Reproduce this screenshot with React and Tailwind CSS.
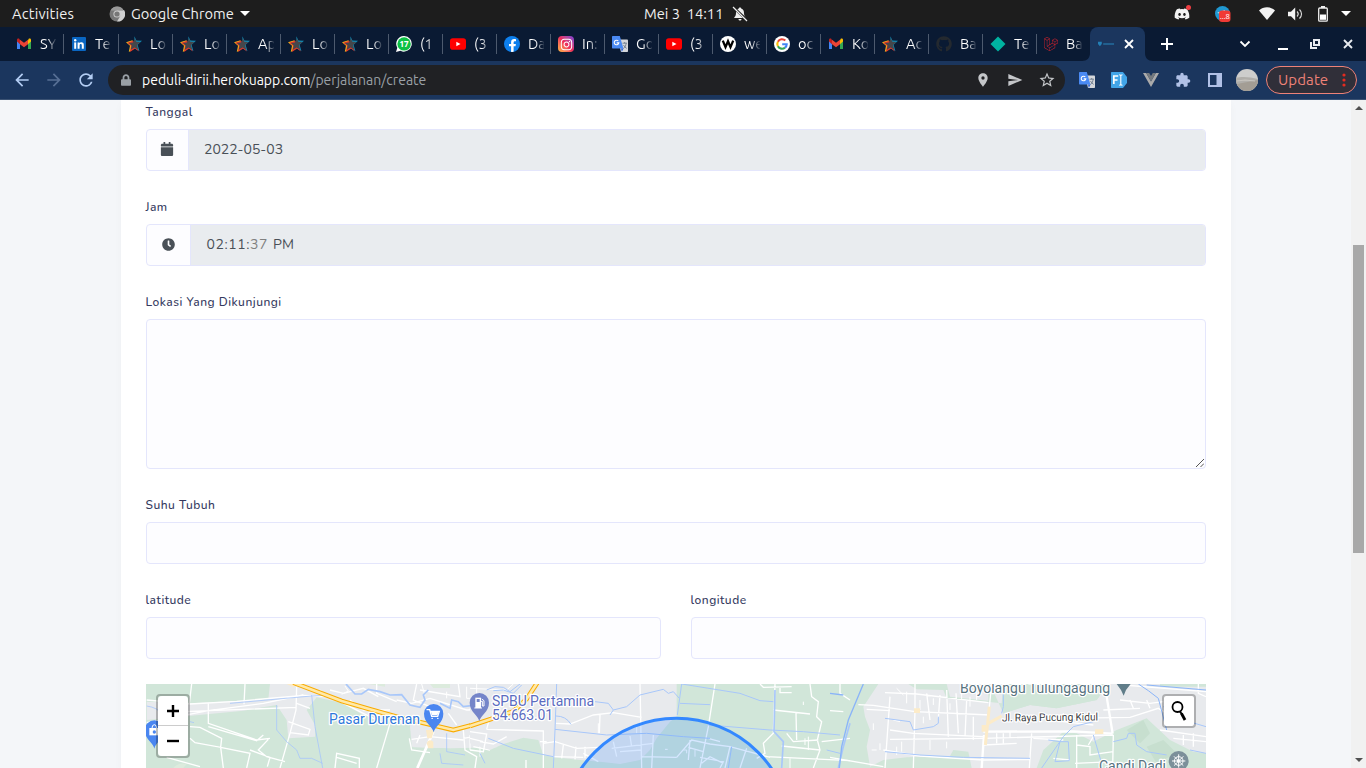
import React from "react";
import { FaCalendar, FaClock, FaDiscord, FaGithub, FaLock, FaInstagram, FaFacebookF, FaLaravel } from "react-icons/fa";
import { MdArrowBack, MdArrowForward, MdRefresh, MdStarOutline, MdLocationOn, MdSend, MdExtension } from "react-icons/md";

const Gmail = () => (
  <svg viewBox="0 0 16 16" className="size-4">
    <path d="M1 4.2V13h3V7.2z" fill="#4285f4" />
    <path d="M15 4.2V13h-3V7.2z" fill="#34a853" />
    <path d="M12 4.2V8.2l3-2.6V4c0-1.5-1.6-1.8-2.4-1.1z" fill="#fbbc04" />
    <path d="M1 4v1.6l3 2.6V4.2l-.6-1.3C2.600 2.200 1 2.500 1 4z" fill="#c5221f" />
    <path d="M4 8.200V3.800l4 3 4-3v4.400l-4 3z" fill="#ea4335" />
  </svg>
);

const LinkedIn = () => (
  <svg viewBox="0 0 16 16" className="size-4">
    <rect x="1" y="1" width="14" height="14" rx="1" fill="#0a66c2" />
    <rect x="3.200" y="6.400" width="2" height="6.400" fill="#fff" />
    <circle cx="4.200" cy="4.200" r="1.200" fill="#fff" />
    <path d="M6.600 6.400h1.900v.9c.8-1.500 4.300-1.600 4.300 1.500v4h-2V9.500c0-2-2.200-1.800-2.200 0v3.300h-2z" fill="#fff" />
  </svg>
);

const Star = () => (
  <svg viewBox="0 0 16 16" className="size-4">
    <path d="M8.400.2l2 4.200 5.600.3-4.400 4.100L13.400 15l-4.900-2.800" fill="#1488b0" />
    <path d="M6.500 4.300L0 6.300l4 3.400L2.800 16l5.700-3.600z" fill="#f5b51b" />
    <path d="M7.200 4.700L1.200 6.700l3.800 3L4 15.900l5-3.500 3.800 3z" fill="#e0352b" />
    <path d="M9 2.600l1.300 3.100 4.200.3-3.500 3.100 1.200 4.700-3.600-2.300-3.900 2.300 1-4.200-2.800-2.600 4.100-.5z" fill="#45474b" />
  </svg>
);

const WhatsApp = () => (
  <svg viewBox="0 0 16 16" className="size-4">
    <path d="M8.200 0A7.800 7.800 0 1 1 4.500 14.800L0 16l1.300-4.300A7.800 7.800 0 0 1 8.200 0z" fill="#fff" />
    <circle cx="8.100" cy="7.900" r="6.700" fill="#0cc143" />
    <text x="8" y="10.700" textAnchor="middle" fontSize="8" fontWeight="700" fill="#fff" fontFamily="Open Sans">17</text>
  </svg>
);

const YouTube = () => (
  <svg viewBox="0 0 16 16" className="size-4">
    <rect y="2.300" width="16" height="11.400" rx="2.800" fill="#f00" />
    <path d="M6.300 5.700v4.600l4.200-2.300z" fill="#fff" />
  </svg>
);

const Facebook = () => (
  <span className="flex size-4 items-end justify-center overflow-hidden rounded-full bg-[#0d7fed]">
    <FaFacebookF className="size-[13px] text-white" />
  </span>
);

const Instagram = () => (
  <span className="flex size-4 items-center justify-center rounded bg-linear-to-tr from-[#fdb83c] via-[#ee2a5b] to-[#7a35d8]">
    <FaInstagram className="size-[13px] text-white" />
  </span>
);

const Translate = () => (
  <svg viewBox="0 0 16 16" className="size-4 shrink-0">
    <path d="M6 3.500h9.200c.5 0 .8.300.8.800v10.900c0 .5-.3.800-.8.800H9z" fill="#d5d7db" />
    <path d="M10.500 7.200h4.500M12.700 6v1.200M11.300 12.500c2-1.300 2.600-3 2.800-5.200M11.500 9c.6 1.300 1.800 2.700 3.200 3.400" stroke="#6d7b8c" strokeWidth=".9" fill="none" />
    <path d="M1 0h6.800l3.600 12.500H1c-.6 0-1-.4-1-1V1c0-.6.400-1 1-1z" fill="#4a8af4" />
    <path d="M9 12.500h2.600L9.800 16z" fill="#3367d6" />
    <path d="M6.300 5a2.300 2.300 0 1 0 .5 1.900H4.700" stroke="#fff" strokeWidth="1.100" fill="none" />
  </svg>
);

const WCircle = () => (
  <svg viewBox="0 0 16 16" className="size-4">
    <circle cx="8" cy="8" r="8" fill="#fff" />
    <path d="M2.800 4.600l2.700 6.500L8 5.200l2.500 5.900 2.700-6.500" fill="none" stroke="#000" strokeWidth="2.300" />
  </svg>
);

const Google = () => (
  <svg viewBox="0 0 16 16" className="size-4">
    <circle cx="8" cy="8" r="8" fill="#fff" />
    <g fill="none" strokeWidth="2.100">
      <path d="M11.300 4.600A4.700 4.700 0 0 0 3.900 5.700" stroke="#ea4335" />
      <path d="M3.900 5.700a4.700 4.700 0 0 0 0 4.600" stroke="#fbbc05" />
      <path d="M3.900 10.300a4.700 4.700 0 0 0 7.100 1.300" stroke="#34a853" />
      <path d="M11 11.600c1.200-1 1.700-2.200 1.700-3.400H8.200" stroke="#4285f4" />
    </g>
  </svg>
);

const GitHub = () => <FaGithub className="size-4 text-[#24292f]" />;
const Diamond = () => (
  <svg viewBox="0 0 16 16" className="size-4"><path d="M8 .5L15.500 8 8 15.500.5 8z" fill="#00b3a1" /></svg>
);
const Laravel = () => <FaLaravel className="size-4 text-[#d4232d]" />;

const tabs = [
  [LinkedIn, "Te"], [Star, "Lo"], [Star, "Lo"], [Star, "Ap"], [Star, "Lo"], [Star, "Lo"],
  [WhatsApp, "(1"], [YouTube, "(3"], [Facebook, "Da"], [Instagram, "In:"], [Translate, "Go"], [YouTube, "(3"],
  [WCircle, "we"], [Google, "oc"], [Gmail, "Ko"], [Star, "Ac"], [GitHub, "Ba"], [Diamond, "Te"], [Laravel, "Ba"],
];

const TabTitle = ({ title }) => (
  <span className="ml-2 w-4 shrink-0 overflow-hidden bg-linear-to-r from-white from-45% to-white/10 bg-clip-text text-[14.67px] leading-5 whitespace-nowrap text-transparent">
    {title}
  </span>
);

function Tab({ Icon, title, wide }) {
  return (
    <div className={wide ? "flex h-full w-[55px] shrink-0 items-center pl-[7px]" : "flex h-full w-[54px] shrink-0 items-center pl-[7px]"}>
      <Icon />
      <TabTitle title={title} />
      <span className="ml-auto h-5 w-px bg-[#4d5a6e]" />
    </div>
  );
}

function TopBar() {
  return (
    <div className="flex h-[27px] items-center bg-[#1d1d1d] text-[14.67px] text-[#f0f0f0]">
      <span className="w-[97px] pt-px pl-3 tracking-[0.2px]">Activities</span>
      <svg viewBox="0 0 16 16" className="ml-3 size-4">
        <circle cx="8" cy="8" r="7.500" fill="#777" />
        <path d="M8 4h7a7.500 7.500 0 0 1-7 11.500L11.300 10z" fill="#d0d0d0" />
        <path d="M1.500 4.500A7.500 7.500 0 0 1 14.800 4.700H8z" fill="#999" />
        <circle cx="8" cy="8" r="3.600" fill="#ccc" />
        <circle cx="8" cy="8" r="2.600" fill="#777" />
      </svg>
      <span className="ml-[6px] w-[105px] pt-px whitespace-nowrap">Google Chrome</span>
      <svg viewBox="0 0 10 5" className="ml-1 h-[5px] w-[10px] fill-white"><path d="M0 0h10L5 5z" /></svg>
      <span className="ml-[394px] w-[80px] pt-px whitespace-pre">Mei 3  14:11</span>
      <svg viewBox="0 0 16 16" className="ml-2 size-4">
        <path d="M8 1.500c-.8 0-1.200.5-1.200 1C4.700 3 4 5 4 7c0 2-.5 3.200-1.700 4.200V12h11.400v-.8C12.500 10.200 12 9 12 7c0-2-.7-4-2.800-4.500 0-.5-.4-1-1.200-1zM6.500 13c0 2 3 2 3 0z" fill="#eee" />
        <path d="M.5.500l15 14" stroke="#1d1d1d" strokeWidth="2.600" />
        <path d="M1 1l14 14" stroke="#eee" strokeWidth="1.200" />
      </svg>
      <span className="relative ml-auto mr-[25px]">
        <FaDiscord className="size-4 text-[#f2f2f2]" />
        <span className="absolute -top-px -right-px size-[5px] rounded-full bg-[#ef3e42]" />
      </span>
      <svg viewBox="0 0 16 16" className="mr-[28px] size-4">
        <circle cx="7.500" cy="7.500" r="7.500" fill="#2098d1" />
        <path d="M2 7l8-3-1 4z" fill="#fff" />
        <rect x="4" y="4.500" width="11.500" height="11.500" rx="3" fill="#f03a35" />
        <text x="9.700" y="13" fontSize="7.500" textAnchor="middle" fill="#fff" fontFamily="Open Sans">…8</text>
      </svg>
      <svg viewBox="0 0 16 13" className="mr-[13px] h-[13px] w-4"><path d="M0 3.500C4.500-.8 11.500-.8 16 3.500L8 13z" fill="#f2f2f2" /></svg>
      <svg viewBox="0 0 16 14" className="mr-[14px] h-[14px] w-4">
        <path d="M0 4.700h3L7.200.5v13L3 9.300H0z" fill="#f2f2f2" />
        <path d="M9 4.500c1.500 1.500 1.500 3.500 0 5M11.500 2.500c2.700 2.700 2.700 6.300 0 9" fill="none" stroke="#ddd" strokeWidth="1.100" />
      </svg>
      <svg viewBox="0 0 10 16" className="mr-[13px] h-4 w-[10px]">
        <path d="M3 0h4v2H3z" fill="#eee" />
        <rect x=".7" y="2" width="8.600" height="13.200" rx="1" fill="none" stroke="#eee" strokeWidth="1.300" />
        <path d="M2 8.500h6v5.300H2z" fill="#fff" />
      </svg>
      <svg viewBox="0 0 10 5" className="mr-[15px] h-[5px] w-[10px] fill-white"><path d="M0 0h10L5 5z" /></svg>
    </div>
  );
}

function TabStrip() {
  return (
    <div className="flex h-[34px] items-center bg-[#0a1a33] pl-[9px]">
      <Tab Icon={Gmail} title="SY" wide />
      {tabs.map(([Icon, title], i) =>
        i < tabs.length - 1 ? (
          <Tab key={i} Icon={Icon} title={title} wide={i === 0} />
        ) : (
          <div key={i} className="flex h-full w-[45px] shrink-0 items-center pl-[7px]">
            <Icon />
            <TabTitle title={title} />
          </div>
        )
      )}
      <div className="flex h-full shrink-0 items-end">
        <svg viewBox="0 0 8 8" className="size-2 fill-[#1b365e]"><path d="M8 0v8H0c5 0 8-3 8-8z" /></svg>
        <div className="flex h-full w-[55px] items-center rounded-t-lg bg-[#1b365e]">
          <svg viewBox="0 0 18 6" className="ml-2 h-[6px] w-[17px]">
            <path d="M0 .5h4v2.500L2 5.500 0 3z" fill="#237fb5" />
            <path d="M5.500 3h11.500" stroke="#2471a3" strokeWidth="1.500" />
          </svg>
          <svg viewBox="0 0 10 10" className="ml-[9px] size-[10px]"><path d="M1 1l8 8M9 1L1 9" stroke="#fff" strokeWidth="1.800" /></svg>
        </div>
        <svg viewBox="0 0 8 8" className="size-2 fill-[#1b365e]"><path d="M0 0v8h8C3 8 0 5 0 0z" /></svg>
      </div>
      <svg viewBox="0 0 12 12" className="ml-2 size-3 shrink-0"><path d="M6 0v12M0 6h12" stroke="#fff" strokeWidth="2" /></svg>
      <svg viewBox="0 0 12 8" className="ml-[66px] h-2 w-3 shrink-0"><path d="M1.500 1.500L6 6l4.500-4.500" fill="none" stroke="#fff" strokeWidth="1.800" /></svg>
      <span className="mt-[9px] ml-[27px] h-[2px] w-[10px] shrink-0 bg-white" />
      <svg viewBox="0 0 10 10" className="ml-[22px] size-[10px] shrink-0" fill="none" stroke="#e8ebf0" strokeWidth="2">
        <path d="M4 1h5v5H4z" /><path d="M1 3v6h6" />
      </svg>
      <svg viewBox="0 0 10 10" className="ml-[23px] size-[10px] shrink-0"><path d="M1 1l8 8M9 1L1 9" stroke="#e8ebf0" strokeWidth="1.900" /></svg>
    </div>
  );
}

function Toolbar() {
  const cell = "flex w-8 shrink-0 items-center justify-center";
  return (
    <div className="flex h-[39px] items-center border-b border-[#3b5273] bg-[#1b365e] pl-[6px] text-[15px]">
      <span className={cell}><MdArrowBack className="size-5 text-[#b3cdf3]" /></span>
      <span className={cell}><MdArrowForward className="size-5 text-[#576f94]" /></span>
      <span className={cell}><MdRefresh className="size-5 text-[#b3cdf3]" /></span>
      <div className="ml-[6px] flex h-[30px] w-[957px] items-center rounded-full bg-[#202124] pr-[2px] pl-[13px] text-[14px]">
        <FaLock className="mr-[11px] h-3 w-[10px] text-[#9aa0a6]" />
        <span className="text-white">peduli-dirii.herokuapp.com</span>
        <span className="text-[#9aa0a6]">/perjalanan/create</span>
        <span className="ml-auto" />
        <span className={cell}><MdLocationOn className="size-4 text-[#c4c6c9]" /></span>
        <span className={cell}><MdSend className="size-4 text-[#c4c6c9]" /></span>
        <span className={cell}><MdStarOutline className="size-[18px] text-[#c4c6c9]" /></span>
      </div>
      <span className="ml-[6px]" />
      <span className={cell}><Translate /></span>
      <span className={cell}>
        <svg viewBox="0 0 16 16" className="size-4">
          <path d="M1 0h11l4 5v6l-4 5H1c-.6 0-1-.4-1-1V1c0-.6.400-1 1-1z" fill="#42a5e8" />
          <path d="M2.800 12V4h4.400M2.800 8h3.700" fill="none" stroke="#fff" strokeWidth="1.700" />
          <path d="M8.200 2.800c1 0 1.600.3 1.600 1v8.400c0 .7-.6 1-1.600 1M11.500 2.800c-1 0-1.700.3-1.700 1M11.500 13.200c-1 0-1.700-.3-1.700-1" fill="none" stroke="#fff" strokeWidth="1.100" />
        </svg>
      </span>
      <span className={cell}>
        <svg viewBox="0 0 16 14" className="h-[14px] w-4"><path d="M0 0h3.200L8 8.500 12.800 0H16L8 14z" fill="#aaa" /><path d="M3.200 0h3L8 3.100 9.800 0h3L8 8.500z" fill="#74797e" /></svg>
      </span>
      <span className={cell}><MdExtension className="size-4 text-[#b1c1e6]" /></span>
      <span className={cell}>
        <svg viewBox="0 0 14 14" className="size-[14px]"><path d="M0 0h14v14H0z" fill="#b1c1e6" /><path d="M2 2h6.500v10H2z" fill="#1b365e" /></svg>
      </span>
      <span className={cell}>
        <svg viewBox="0 0 22 22" className="size-[22px] shrink-0">
          <clipPath id="avatar"><circle cx="11" cy="11" r="11" /></clipPath>
          <g clipPath="url(#avatar)">
            <path d="M0 0h22v22H0z" fill="#cdcdcc" />
            <path d="M0 9c6-2 14-1 22 1v12H0z" fill="#b0aeaa" />
            <path d="M0 16c6-3 14-3 22-5v12H0z" fill="#a39d94" />
            <path d="M1 12l8-1 10 1" stroke="#c9c6c0" strokeWidth="1.200" fill="none" />
          </g>
        </svg>
      </span>
      <div className="ml-[3px] flex h-7 w-[91px] items-center rounded-full border border-[#ee8278] bg-[#302f39] pl-[11px] text-[#ee8278]">
        <span className="w-[50px] tracking-[0.1px]">Update</span>
        <svg viewBox="0 0 4 14" className="ml-[14px] h-[14px] w-1 fill-[#e32b20]"><circle cx="2" cy="2" r="1.600" /><circle cx="2" cy="7" r="1.600" /><circle cx="2" cy="12" r="1.600" /></svg>
      </div>
    </div>
  );
}

function Field({ label, children, className = "" }) {
  return (
    <div className={"mb-[25px] " + className}>
      <div className="mb-[7px] -ml-[0.5px] pt-px text-[12px] leading-5 font-[550] tracking-[0.5px] text-[#34395e]">{label}</div>
      {children}
    </div>
  );
}

const pin = "M0 56C-3 38-29 28-29 0a29 29 0 1 1 58 0C29 28 3 38 0 56z";

function MapDrawing() {
  return (
    <svg viewBox="0 0 1060 84" className="block h-[84px] w-[1060px] bg-[#d1e6d9]" fontFamily="Roboto">
      <g transform="translate(-16 -14) scale(.33333)" fill="none">
        <path d="M420 42H1100V190L1010 205 960 235H845L835 185 770 160 750 140 700 135 640 100 560 82 530 120 555 165V200L475 205 470 150 440 105 340 122 50 150V95L180 100 415 88z" fill="#e8eaed" />
        <path d="M715 42h50v8zM900 42h60v12h-50zM130 294q15-18 40-12l-10 12z" fill="#dcebdd" />
        <path d="M740 140L840 165 850 232 960 235V294H740z" fill="#d1e6d9" />
        <path d="M840 165L950 180 1100 185V232L960 235 845 230z" fill="#e8eaed" />
        <g stroke="#fff" strokeWidth="4">
          <path d="M50 90L180 102 320 94 520 76 600 80 760 160M50 158L235 122 400 100 520 75M185 42L178 100M345 42L342 103M500 50L498 120 480 190 450 294M160 125L500 112M235 98V160L380 210 420 205M235 170L380 212 400 195M415 208L385 240 410 260 465 275M180 170L210 172 275 205 272 232 195 218 180 205M272 232L360 250 350 294M272 232L280 294M110 262L210 290M360 240L420 262 412 290M475 155L540 178 535 195 480 188M615 294L620 250 688 265V294M740 294L780 160M620 262L680 280M500 100L540 115M600 60L640 70 700 55 745 80M660 90L700 120 780 120M740 42V70L800 95M860 42L850 90 900 110M800 90L845 100 900 85 1010 120 1090 115M870 60L990 80 985 42M1040 42L1020 120 1090 140M838 205L845 240 900 248M870 195L860 220M845 208L900 200 1000 210M955 130L980 165M1000 180L1005 240 1040 260 1035 294M1000 205L1090 190M1030 230L1080 240" />
          <path d="M910 185L862 294" strokeWidth="8" />
          <path d="M645 48l10 15-20 10M570 60l20 15M1010 50v35h40M1050 42v25M950 65v20M875 42l10 35M1050 200v60M1020 195v45" strokeWidth="3" />
        </g>
        <g stroke="#a8c7fa" strokeWidth="4">
          <path d="M50 108q35 5 45 25M180 155l12 3M440 105V180L470 215 500 240 510 265 545 265 578 280M545 75L555 170 578 294M300 100L545 78 600 75M930 250L935 280 1000 285M950 190V245L1005 255" strokeWidth="2.500" />
          <path d="M648 42L675 72H695L715 58 750 65 780 75 815 74 840 105 870 112 885 90 880 75 895 60M930 100L960 115 965 90 985 95 1000 110 1080 100" strokeWidth="5" />
        </g>
        <path d="M888 180h25l-8 25h-13zM890 220q5-15 20-5v20h-15zM470 42h30l-10 10z" fill="#fcebc8" />
        <path d="M490 38L635 93 725 119 795 139 970 180 1100 146" stroke="#f9ab00" strokeWidth="14" />
        <path d="M490 38L635 93 725 119 795 139 970 180 1100 146" stroke="#ffe9a8" strokeWidth="8" />
        <g transform="translate(911 131)"><path d={pin} fill="#4a86f0" /><path d="M-20-12h8l6 20h18l5-15h-26M-5 14h1M12 14h1" stroke="#fff" strokeWidth="4" strokeLinecap="round" /><path d="M-9-8h25l-5 13H-5z" fill="#fff" /></g>
        <g transform="translate(73 180)"><path d={pin} fill="#4a86f0" /><rect x="-15" y="-6" width="28" height="22" fill="#fff" /><path d="M-7-5q0-11 7-11t7 11" stroke="#fff" strokeWidth="3" /><circle cy="6" r="5" fill="#4a86f0" /></g>
      </g>

      <g transform="translate(324 -14) scale(.33333)" fill="none">
        <path d="M0 42H620V140L600 155 560 205 540 240 510 270 450 282 390 275 330 270 255 262 220 255 205 210 160 203 100 222 60 240 0 220z" fill="#e8eaed" />
        <g stroke="#fff" strokeWidth="4">
          <path d="M50 178L220 183V294M0 185L50 192 40 245 0 240M50 178L60 140M30 215L70 222 110 200M0 205L40 215M220 220L255 215 320 235 385 232M280 225L275 265M318 230L315 268M250 260L340 262M168 270V294M210 215h20M345 230v35M258 160L300 162 370 135 430 128 515 142M390 135L388 190M510 42L515 294M385 275L340 250M430 215L440 260M425 235L550 220M480 198L485 230M450 245L515 240M735 42L715 170 690 294M550 195L545 294M515 260L620 262M620 262L665 210 720 222 780 230 900 262M660 210L655 270M655 232L700 245M780 230L765 294M830 235L810 294M715 205L750 215M690 262L760 275 750 294M695 280L720 260 760 280M870 42L880 52 965 50M915 42L910 190 880 220 885 250 860 265M910 120L1020 132M930 50V68H965M1020 42L1025 80 1045 95 1040 140 1055 155 1042 210 1050 240 1030 294M978 130L980 210M935 228L1050 240M950 190L970 215 1045 210M890 260L1140 272M1110 42V70L1140 90M1055 215L1140 205" />
          <path d="M0 55L110 60 130 42M20 42v30M385 160v30M500 170v20M585 238h8M640 240h10v10M675 240v20M1000 95v10M1005 205v20M1015 200v40M960 265v29" strokeWidth="3" />
        </g>
        <g stroke="#a8c7fa" strokeWidth="3">
          <path d="M50 60L75 50 100 52 120 65 150 42M70 62L100 60 130 70 155 45" />
          <path d="M260 42L255 180 250 294M375 95L415 100 430 120 470 110 510 75 580 58 595 70 610 65 628 85M635 42L622 135M635 42L810 70 870 92 910 95M630 100L720 104M430 120L420 135M255 178L410 195 530 190 640 200 720 205M55 205L130 235 250 260M258 138q30 0 45 25M30 250l15 30M715 165L900 180 1000 185 1110 195M785 230L775 294M1070 240L1110 250" />
          <path d="M915 60L912 185 940 215 935 294M1140 160L1120 230 1105 294" strokeWidth="5" />
        </g>
        <path d="M0 168L70 145 130 124 170 87 202 38" stroke="#f9ab00" strokeWidth="14" />
        <path d="M0 168L70 145 130 124 170 87 202 38" stroke="#ffe9a8" strokeWidth="8" />
        <circle cx="619" cy="491" r="346" fill="#3388ff" fillOpacity=".2" stroke="#3388ff" strokeWidth="9" />
        <g transform="translate(28 98)"><path d={pin} fill="#7585c9" /><path d="M5-4h4V10h5V-6L7-11M-15 16H8" stroke="#fff" strokeWidth="3" /><path d="M-12-15H5V16h-17z" fill="#fff" /><path d="M-8-11H1v9h-9z" fill="#7585c9" /></g>
      </g>

      <g transform="translate(684 -14) scale(.33333)" fill="none">
        <path d="M145 42H1128V250L1090 245 1020 210 950 145 860 180 790 215 740 190 700 185 640 240 620 294H425L415 245 370 240 360 258 230 262 160 270 120 290 110 230 120 180 105 140 100 110z" fill="#e8eaed" />
        <path d="M235 42H480L520 130 600 105 680 115 800 90 835 42H520L515 100 420 90 350 85 340 60 260 58zM990 42h138v8H990z" fill="#d1e6d9" />
        <path d="M520 42h315l-35 48-120 25-80-10-80 25z" fill="#d1e6d9" />
        <path d="M350 42H475V92L360 80z" fill="#e8eaed" />
        <path d="M890 180l50-30 20 40-30 30zM950 230l50-20 40 40-60 30z" fill="#c7dfcf" />
        <g stroke="#fff" strokeWidth="4">
          <path d="M85 104L130 106 255 125 480 135M110 118L180 122M180 80L165 294M255 42V120L250 294M180 208L460 205 850 195M165 68L260 72 475 98M290 70L300 150M330 75L325 145M378 70L385 190M350 60L355 200M410 90L405 200M430 140V210M160 240L270 258 460 270 600 268M180 180L250 190 460 200M485 42L475 140M460 225L560 220M500 190V220M520 190V220M540 185V205M605 190L598 294M700 130V155L790 165M690 145L900 142 985 115 1010 130M870 90L960 100 1000 95M820 120L930 115M900 90L910 115M950 90L960 115M740 195V294M740 225L780 230V255L850 245M610 205L700 210M775 225L790 200M0 122L40 125M0 262L160 290M850 195L848 294M990 180L1128 200M1060 195V225M1090 190V230M1030 205L1128 215M1105 42V70L1128 80M880 45L1128 65M670 265L720 270M735 280L850 275" />
          <path d="M200 55l20 20M230 65v35M270 90v30M310 85v20M360 100v20M395 60v30M420 80v30M190 150l20 5M215 215v30M130 160v20M150 220v20M300 210v30M350 215v20M440 60v30M125 240h15M200 230v25M280 140v20" strokeWidth="3" />
          <path d="M460 185L730 184 848 191M848 191L830 80M462 195L455 294" strokeWidth="7" />
        </g>
        <path d="M478 110L473 160 466 225M475 160L515 138" stroke="#fcebc8" strokeWidth="9" />
        <path d="M455 165h18v20h-18zM795 178h25v14h-25zM252 115h18v14h-18z" fill="#fcebc8" />
        <g stroke="#a8c7fa" strokeWidth="3">
          <path d="M165 145L240 155 250 180 310 170 325 160V140M165 245L270 255 400 262 600 265M520 60V110L515 130M790 155L730 170 700 200 635 294M655 210L690 215 675 275 718 272 715 215 690 215M790 195L815 280M850 215L890 205 895 190 915 190 920 225 950 245 1010 255M1000 110L1060 150 1128 170M1080 240L1128 250" />
          <path d="M100 42L55 150 35 230 28 294M0 70L40 75" stroke="#8ab4f8" strokeWidth="4" />
          <path d="M925 42L955 62 985 85 1010 180M950 45L1128 60" stroke="#8ab4f8" />
        </g>
        <path d="M860 42h42l-14 18-7 17-8-17z" fill="#607d89" />
        <g transform="translate(1046 273)"><circle r="30" fill="#7c909a" /><g stroke="#fff" strokeWidth="3"><circle r="13" /><circle r="4" /><path d="M0-20V20M-20 0H20M-14-14L14 14M14-14L-14 14" /></g></g>
      </g>
      <g stroke="#fff" strokeWidth="2.500" strokeLinejoin="round" paintOrder="stroke">
        <text x="183" y="40" fontSize="14" fill="#2e78db" textLength="91">Pasar Durenan</text>
        <text x="346" y="22" fontSize="14" fill="#5b6cc0" textLength="102">SPBU Pertamina</text>
        <text x="346" y="36" fontSize="14" fill="#5b6cc0" textLength="61">54.663.01</text>
        <text x="814" y="9" fontSize="14" fill="#58737f" textLength="150">Boyolangu Tulungagung</text>
        <text x="856" y="37" fontSize="10.500" fill="#3c4043" textLength="96" transform="rotate(-.5 900 35)">Jl. Raya Pucung Kidul</text>
        <text x="953" y="87" fontSize="14" fill="#58737f" textLength="67">Candi Dadi</text>
      </g>
    </svg>
  );
}

function MapPanel() {
  return (
    <div className="relative h-[84px] overflow-hidden">
      <MapDrawing />
      <div className="absolute top-[10px] left-[10px] w-[34px] rounded border-2 border-black/25 bg-clip-padding">
        <div className="flex h-[30px] items-center justify-center rounded-t-sm border-b border-[#ccc] bg-white"><svg viewBox="0 0 12 12" className="size-3"><path d="M6 0v12M0 6h12" stroke="#000" strokeWidth="2.400" /></svg></div>
        <div className="flex h-[30px] items-center justify-center rounded-b-sm bg-white"><svg viewBox="0 0 12 12" className="size-3"><path d="M0 6h12" stroke="#000" strokeWidth="2.400" /></svg></div>
      </div>
      <div className="absolute top-[10px] right-[10px] flex size-[34px] items-center justify-center rounded border-2 border-black/25 bg-white bg-clip-padding">
        <svg viewBox="0 0 16 20" className="h-5 w-4" fill="none" stroke="#000"><circle cx="6.500" cy="6" r="5" strokeWidth="1.800" /><path d="M9 10.500l2 3" strokeWidth="2" /><path d="M10.500 12.500l3.500 6.500" strokeWidth="2.800" /></svg>
      </div>
    </div>
  );
}

const box = "border border-[#e4e6fc] rounded-[4px] bg-[#fdfdff]";
const addon = "flex items-center justify-center border-r border-[#e4e6fc] pr-px pb-[2px] text-[#495057]";
const value = "flex grow items-center bg-[#e9ecef] pb-[2px] pl-[15px] text-[14px] whitespace-pre text-[#495057]";

export default function App() {
  return (
    <div className="flex h-[768px] w-[1366px] flex-col overflow-hidden bg-white font-['Ubuntu','Noto_Sans','Open_Sans',sans-serif]">
      <TopBar />
      <TabStrip />
      <Toolbar />
      <div className="flex h-[668px] bg-[#f4f6f9]">
        <main className="ml-[121px] h-full w-[1110px] overflow-hidden bg-white px-[25px] pt-px font-['Nunito','Open_Sans',sans-serif] shadow-[0_4px_8px_rgba(0,0,0,0.03)]">
          <Field label="Tanggal">
            <div className={box + " flex h-[42px] overflow-hidden"}>
              <span className={addon + " w-[42px]"}><FaCalendar className="size-[14px]" /></span>
              <span className={value}>2022-05-03</span>
            </div>
          </Field>
          <Field label="Jam">
            <div className={box + " flex h-[42px] overflow-hidden"}>
              <span className={addon + " w-11"}><FaClock className="size-[13px]" /></span>
              <span className={value}>
                <span className="ml-[0.5px] tracking-[0.6px]">02:11:</span>
                <span className="tracking-[0.6px] text-[#808080]">37</span>
                <span className="ml-[5px]">PM</span>
              </span>
            </div>
          </Field>
          <Field label="Lokasi Yang Dikunjungi">
            <div className={box + " flex h-[150px] items-end justify-end p-px"}>
              <svg viewBox="0 0 8 8" className="size-2"><path d="M0 8L8 0M4.500 8L8 4.500" stroke="#555" strokeWidth="1" /></svg>
            </div>
          </Field>
          <Field label="Suhu Tubuh"><div className={box + " h-[42px]"} /></Field>
          <div className="grid grid-cols-2 gap-[30px]">
            <Field label="latitude"><div className={box + " h-[42px]"} /></Field>
            <Field label="longitude"><div className={box + " h-[42px]"} /></Field>
          </div>
          <MapPanel />
        </main>
        <div className="ml-auto flex h-full w-[15px] flex-col items-center bg-[#f1f1f1]">
          <svg viewBox="0 0 8 4" className="mt-[6px] h-1 w-2 fill-[#505050]"><path d="M0 4h8L4 0z" /></svg>
          <span className="mt-[135px] h-[308px] w-[11px] bg-[#a8a8a8]" />
          <svg viewBox="0 0 8 4" className="mt-auto mb-[6px] h-1 w-2 fill-[#505050]"><path d="M0 0h8L4 4z" /></svg>
        </div>
      </div>
    </div>
  );
}
